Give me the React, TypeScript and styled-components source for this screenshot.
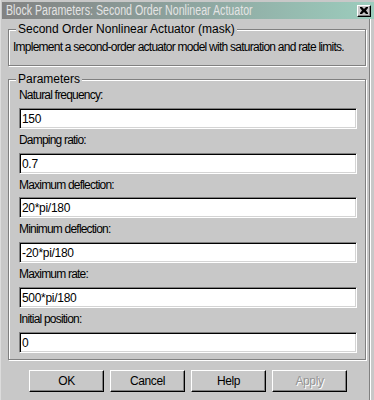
import React from 'react';
import styled, { createGlobalStyle } from 'styled-components';

const GlobalStyle = createGlobalStyle`
  html, body {
    margin: 0;
    padding: 0;
    background: #c8c8c8;
  }
  * {
    box-sizing: border-box;
  }
`;

const Window = styled.div`
  width: 374px;
  height: 400px;
  background: #c8c8c8;
  border-left: 1px solid #dcdcdc;
  padding-left: 1px;
  font-family: 'Liberation Sans', Arial, sans-serif;
  font-size: 12px;
  line-height: 13px;
  color: #000;
  overflow: hidden;
`;

const TitleBar = styled.div`
  margin-top: 2px;
  height: 17px;
  display: flex;
  align-items: center;
  justify-content: space-between;
  padding: 0 3px 0 4px;
  background: linear-gradient(to right, #828282 0%, #8fa8a2 55%, #9ccdbd 100%);
`;

const Title = styled.span`
  color: #e4e4e4;
  font-size: 14px;
  white-space: nowrap;
  transform: scaleX(0.76);
  transform-origin: left center;
`;

const CloseButton = styled.div`
  width: 14px;
  height: 12px;
  background: #c8c8c8;
  border-top: 1px solid #fff;
  border-left: 1px solid #fff;
  border-right: 1px solid #000;
  border-bottom: 1px solid #000;
  box-shadow: inset -1px -1px 0 #808080;
  display: flex;
  align-items: center;
  justify-content: center;
`;

const Body = styled.div`
  width: 368px;
  height: 381px;
  border-right: 1px solid #808080;
  box-shadow: 1px 0 0 #fff;
  padding: 10px 0 0 6px;
`;

const Group = styled.section<{ $height: number; $gap?: number }>`
  width: 358px;
  height: ${(p) => p.$height}px;
  margin-top: ${(p) => p.$gap ?? 0}px;
  border: 1px solid #808080;
  box-shadow: inset 1px 1px 0 #fff, 1px 1px 0 #fff;
`;

const Caption = styled.div`
  width: fit-content;
  margin: -7px 0 0 7px;
  padding: 0 2px;
  background: #c8c8c8;
  white-space: nowrap;
`;

const Description = styled.p`
  margin: 5px 0 0 4px;
  letter-spacing: -0.75px;
  white-space: nowrap;
`;

const ParamList = styled.div`
  display: flex;
  flex-direction: column;
  margin-top: -2px;
  padding: 0 0 0 10px;
`;

const Field = styled.div`
  display: flex;
  flex-direction: column;
  height: 44.8px;
`;

const Label = styled.label`
  flex: 1;
  padding-top: 5px;
  letter-spacing: -0.8px;
  white-space: nowrap;
`;

const TextInput = styled.div`
  width: 338px;
  height: 21px;
  flex: none;
  background: #fff;
  border-top: 1px solid #808080;
  border-left: 1px solid #808080;
  border-right: 1px solid #fff;
  border-bottom: 1px solid #fff;
  box-shadow: inset 1px 1px 0 #000, inset -1px -1px 0 #d4d4d4;
  padding: 3px 0 0 2px;
  font-size: 12px;
  line-height: 14px;
  letter-spacing: -0.3px;
  white-space: nowrap;
`;

const ButtonRow = styled.div`
  display: flex;
  justify-content: center;
  gap: 6px;
  width: 358px;
  margin-top: 10px;
  padding-left: 2px;
`;

const Button = styled.div<{ $disabled?: boolean }>`
  width: 75px;
  height: 22px;
  display: flex;
  align-items: center;
  justify-content: center;
  background: #c8c8c8;
  border-top: 1px solid #fff;
  border-left: 1px solid #fff;
  border-right: 1px solid #000;
  border-bottom: 1px solid #000;
  box-shadow: inset -1px -1px 0 #808080;
  font-size: 12px;
  letter-spacing: -0.4px;
  color: ${(p) => (p.$disabled ? '#949494' : '#000')};
  text-shadow: ${(p) => (p.$disabled ? '1px 1px 0 #fff' : 'none')};
`;

const params = [
  ['Natural frequency:', '150'],
  ['Damping ratio:', '0.7'],
  ['Maximum deflection:', '20*pi/180'],
  ['Minimum deflection:', '-20*pi/180'],
  ['Maximum rate:', '500*pi/180'],
  ['Initial position:', '0'],
];

export default function App() {
  return (
    <>
      <GlobalStyle />
      <Window>
        <TitleBar>
          <Title>Block Parameters: Second Order Nonlinear Actuator</Title>
          <CloseButton>
            <svg width="8" height="7" viewBox="0 0 8 7">
              <path d="M0 0h2l2 2 2-2h2v1L6 3.5 8 6v1H6L4 5 2 7H0V6l2-2.5L0 1z" fill="#000" />
            </svg>
          </CloseButton>
        </TitleBar>
        <Body>
          <Group $height={37}>
            <Caption>Second Order Nonlinear Actuator (mask)</Caption>
            <Description>Implement a second-order actuator model with saturation and rate limits.</Description>
          </Group>
          <Group $height={281} $gap={13}>
            <Caption>Parameters</Caption>
            <ParamList>
              {params.map(([label, value]) => (
                <Field key={label}>
                  <Label>{label}</Label>
                  <TextInput>{value}</TextInput>
                </Field>
              ))}
            </ParamList>
          </Group>
          <ButtonRow>
            <Button>OK</Button>
            <Button>Cancel</Button>
            <Button>Help</Button>
            <Button $disabled>Apply</Button>
          </ButtonRow>
        </Body>
      </Window>
    </>
  );
}
